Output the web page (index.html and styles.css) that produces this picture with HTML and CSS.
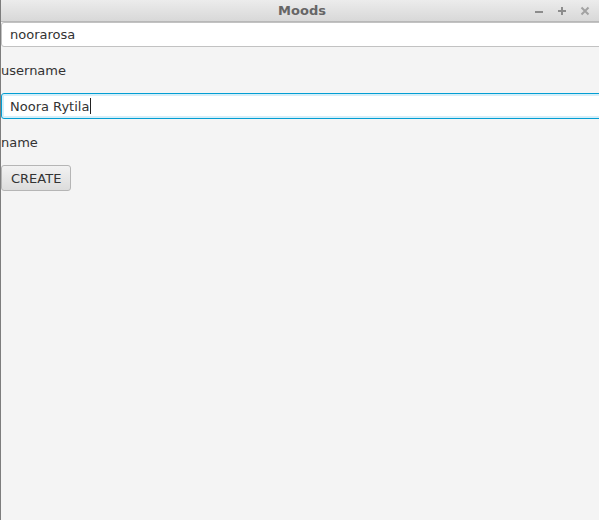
FILE: index.html
```html
<!DOCTYPE html>
<html>
<head>
<meta charset="utf-8">
<title>Moods</title>
<link rel="stylesheet" href="styles.css">
</head>
<body>
<div class="window">
  <div class="titlebar">
    <span class="title">Moods</span>
    <div class="controls">
      <svg class="ctl" width="10" height="10" viewBox="0 0 10 10"><rect x="1" y="5" width="8" height="2" fill="#8c8c8c"/></svg>
      <svg class="ctl" width="10" height="10" viewBox="0 0 10 10"><rect x="1" y="4" width="8" height="2" fill="#8c8c8c"/><rect x="4" y="1" width="2" height="8" fill="#8c8c8c"/></svg>
      <svg class="ctl" width="10" height="10" viewBox="0 0 10 10"><path d="M1.5 1.5 L8.5 8.5 M8.5 1.5 L1.5 8.5" stroke="#a2a2a2" stroke-width="2"/></svg>
    </div>
  </div>
  <div class="content">
    <div class="field">noorarosa</div>
    <div class="label first">username</div>
    <div class="field focused">Noora Rytila<span class="caret"></span></div>
    <div class="label second">name</div>
    <button class="btn">CREATE</button>
  </div>
</div>
</body>
</html>
```
FILE: styles.css
```css
html, body {
  margin: 0;
  padding: 0;
  width: 599px;
  height: 520px;
  overflow: hidden;
  background: #f4f4f4;
  font-family: "DejaVu Sans", sans-serif;
  font-size: 13px;
  color: #333;
}
.window {
  height: 520px;
  display: flex;
  flex-direction: column;
  border-left: 1px solid #7d7d7d;
  box-sizing: border-box;
}
.titlebar {
  height: 21px;
  border-bottom: 1px solid #b8b8b8;
  background: linear-gradient(#ececec, #d8d8d8);
  position: relative;
  display: flex;
  align-items: center;
  justify-content: center;
}
.title {
  font-weight: bold;
  color: #666;
  font-size: 13px;
  margin-left: 4px;
}
.controls {
  position: absolute;
  right: 9px;
  top: 6px;
  display: flex;
  gap: 13px;
}
.ctl { display: block; }
.content {
  display: flex;
  flex-direction: column;
  align-items: flex-start;
  flex: 1;
}
.field {
  align-self: stretch;
  margin-right: -4px;
  height: 25px;
  box-sizing: border-box;
  background: #fff;
  border: 1px solid #c2c2c2;
  border-radius: 3px;
  padding: 0 8px;
  line-height: 23px;
  color: #333;
  display: flex;
  align-items: center;
}
.field.focused {
  margin-top: 14px;
  height: 26px;
  border-color: #039ed3;
  box-shadow: inset 0 0 0 2px #d6eff9;
}
.caret {
  display: inline-block;
  width: 1px;
  height: 16px;
  background: #222;
  margin-left: 1px;
}
.label {
  margin-top: 14px;
  height: 17px;
  line-height: 17px;
}
.label.first { margin-top: 15px; }
.label.second { margin-top: 15px; }
.btn {
  margin-top: 14px;
  height: 26px;
  padding: 0 9px;
  font-family: "DejaVu Sans", sans-serif;
  font-size: 13px;
  color: #333;
  border: 1px solid #b5b5b5;
  border-radius: 3px;
  background: linear-gradient(#f2f2f2, #dcdcdc);
}
```
